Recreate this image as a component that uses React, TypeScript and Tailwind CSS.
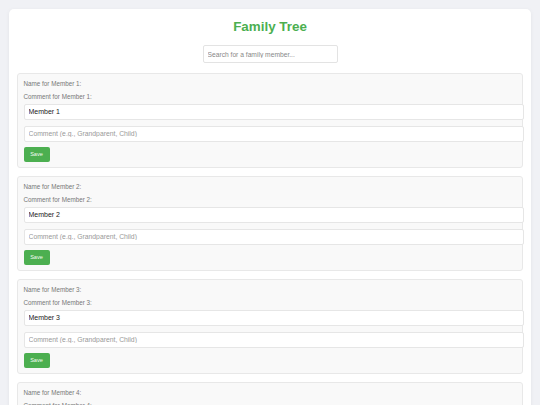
import * as React from 'react'

const members = [1, 2, 3, 4, 5]

function MemberCard({ n }: { n: number }) {
  const [name, setName] = React.useState(`Member ${n}`)
  const [comment, setComment] = React.useState('')

  return (
    <div className="mb-[7.7px] flex flex-col rounded-[3px] border border-[#e8e8e8] bg-[#f9f9f9] px-[5.5px] pt-[6px] pb-[5.6px]">
      <label className="mb-[6.4px] block text-[6.3px] leading-[7px] text-[#777]">Name for Member {n}:</label>
      <label className="mb-[3.6px] block text-[6.3px] leading-[7px] text-[#777]">Comment for Member {n}:</label>
      <input
        value={name}
        onChange={(e) => setName(e.target.value)}
        className="h-[16px] w-[calc(100%+7px)] rounded-[2px] border border-[#e6e6e6] bg-white px-[4px] text-[7px] text-[#222] outline-none"
      />
      <input
        value={comment}
        onChange={(e) => setComment(e.target.value)}
        placeholder="Comment (e.g., Grandparent, Child)"
        className="mt-[5.7px] h-[16.3px] w-[calc(100%+7px)] rounded-[2px] border border-[#e6e6e6] bg-white px-[4px] text-[6.8px] text-[#222] outline-none placeholder:text-[#999]"
      />
      <button className="mt-[5.3px] h-[14.4px] w-[26px] rounded-[2px] bg-[#4caf50] text-[5.6px] text-[#f4fbf4]">
        Save
      </button>
    </div>
  )
}

export default function App() {
  const [query, setQuery] = React.useState('')

  return (
    <div className="min-h-screen bg-[#f0f1f5] px-[9px] pt-[9px] font-['Liberation_Sans',Arial,sans-serif]">
      <div className="rounded-[5px] bg-white px-[8px] pt-[10.4px] pb-[8px] shadow-[0_1px_4px_rgba(0,0,0,0.06)]">
        <h1 className="mb-[10.2px] text-center text-[13.4px] leading-[15.4px] font-bold text-[#4caf50]">Family Tree</h1>
        <div className="mb-[9.7px] flex justify-center">
          <input
            value={query}
            onChange={(e) => setQuery(e.target.value)}
            placeholder="Search for a family member..."
            className="h-[18.3px] w-[135px] rounded-[2px] border border-[#e3e3e3] px-[4px] text-[6.7px] outline-none placeholder:text-[#888]"
          />
        </div>
        {members.map((n) => (
          <MemberCard key={n} n={n} />
        ))}
      </div>
    </div>
  )
}
